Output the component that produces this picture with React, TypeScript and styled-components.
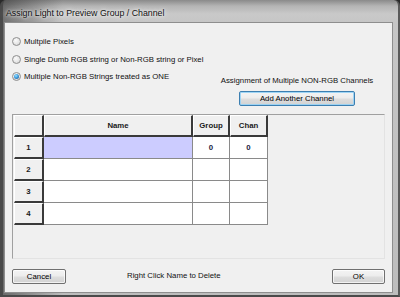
import React from "react";
import styled, { createGlobalStyle } from "styled-components";

const Global = createGlobalStyle`
  html, body { margin: 0; padding: 0; background: #2a2a2a; }
  body { width: 400px; height: 297px; overflow: hidden; }
  * { box-sizing: border-box; }
`;

const Window = styled.div`
  width: 400px;
  height: 297px;
  display: flex;
  flex-direction: column;
  border-radius: 6px 6px 0 0;
  border-left: 3px solid #4a4a4a;
  border-right: 2px solid #5a5a5a;
  border-bottom: 2px solid #4a4a4a;
  background:
    linear-gradient(90deg, rgba(40,40,40,0.55) 0px, rgba(80,80,80,0.0) 60px, rgba(0,0,0,0) 100%),
    linear-gradient(180deg, #8a8a8a 0px, #b4b4b4 6px, #c9c9c9 14px, #c6c6c6 22px, #bdbdbd 100%);
  font-family: "Liberation Sans", Arial, sans-serif;
  color: #000;
`;

const TitleBar = styled.div`
  height: 22px;
  flex: none;
  display: flex;
  align-items: center;
  padding-left: 3px;
  padding-top: 3px;
  font-size: 8.8px;
  color: #111;
  text-shadow: 0 0 6px #f4f4f4, 0 0 3px #ffffff;
`;

const Client = styled.div`
  flex: 1;
  margin: 0 5px 2px 1px;
  background: #f0f0f0;
  border: 1px solid #8e8e8e;
  display: flex;
  flex-direction: column;
  padding: 10px 7px 8px 7px;
  font-size: 7.8px;
  color: #111;
`;

const TopSection = styled.div`
  display: flex;
  justify-content: space-between;
  margin-bottom: 8px;
`;

const OptionList = styled.div`
  display: flex;
  flex-direction: column;
`;

const OptionRow = styled.label`
  height: 17.5px;
  display: flex;
  align-items: center;
  gap: 3px;
  white-space: nowrap;
`;

const Radio = styled.span<{ $checked?: boolean }>`
  width: 9px;
  height: 9px;
  border-radius: 50%;
  border: 1px solid #8f8f8f;
  background: radial-gradient(circle at 40% 35%, #fbfbfb 0%, #e6e6e6 55%, #cfcfcf 100%);
  display: flex;
  align-items: center;
  justify-content: center;
  flex: none;
  &::after {
    content: "";
    display: ${(p) => (p.$checked ? "block" : "none")};
    width: 5px;
    height: 5px;
    border-radius: 50%;
    background: radial-gradient(circle at 40% 35%, #9be3ff 0%, #3f9ee0 45%, #1b4f8a 100%);
  }
`;

const AssignColumn = styled.div`
  width: 160px;
  margin-right: 8px;
  padding-top: 42px;
  display: flex;
  flex-direction: column;
  align-items: center;
  gap: 4px;
`;

const Caption = styled.div`
  line-height: 12px;
  white-space: nowrap;
`;

const Button = styled.button<{ $default?: boolean; $w: number }>`
  width: ${(p) => p.$w}px;
  height: 15px;
  padding: 0;
  font-family: inherit;
  font-size: 7.8px;
  color: #000;
  border-radius: 2px;
  border: 1px solid ${(p) => (p.$default ? "#3c7fb1" : "#707070")};
  background: linear-gradient(180deg, #f4f4f4 0%, #ececec 48%, #dedede 52%, #d2d2d2 100%);
  box-shadow: inset 0 0 0 1px ${(p) => (p.$default ? "rgba(150,210,245,0.9)" : "rgba(255,255,255,0.7)")};
  display: flex;
  align-items: center;
  justify-content: center;
`;

const Panel = styled.div`
  flex: 1;
  border: 1px solid #a0a0a0;
  border-right-color: #e3e3e3;
  border-bottom-color: #e3e3e3;
  background: #f0f0f0;
  padding: 0 0 0 1px;
  margin-bottom: 10px;
`;

const Grid = styled.div`
  display: grid;
  grid-template-columns: 30px 149px 37px 38px;
  grid-auto-rows: 22px;
  width: 254px;
`;

const HeadCell = styled.div`
  background: #f0f0f0;
  border-top: 1px solid #ffffff;
  border-left: 1px solid #ffffff;
  border-right: 2px solid #3a3a3a;
  border-bottom: 2px solid #3a3a3a;
  display: flex;
  align-items: center;
  justify-content: center;
  font-weight: bold;
  font-size: 7.8px;
  color: #1a1a1a;
`;

const DataCell = styled.div<{ $selected?: boolean }>`
  background: ${(p) => (p.$selected ? "#ccccff" : "#ffffff")};
  border-right: 1px solid #8a8a8a;
  border-bottom: 1px solid #8a8a8a;
  display: flex;
  align-items: center;
  justify-content: center;
  font-size: 7.8px;
  font-weight: bold;
  color: #1a1a40;
`;

const BottomRow = styled.div`
  display: flex;
  align-items: center;
  height: 15px;
`;

const Hint = styled.div`
  margin-left: 61px;
  margin-top: -3px;
  white-space: nowrap;
`;

const Spacer = styled.div`
  flex: 1;
`;

const rows = [1, 2, 3, 4];

export default function App() {
  return (
    <>
      <Global />
      <Window>
        <TitleBar>Assign Light to Preview Group / Channel</TitleBar>
        <Client>
          <TopSection>
            <OptionList>
              <OptionRow>
                <Radio />
                Multpile Pixels
              </OptionRow>
              <OptionRow>
                <Radio />
                Single Dumb RGB string or Non-RGB string or Pixel
              </OptionRow>
              <OptionRow>
                <Radio $checked />
                Multiple Non-RGB Strings treated as ONE
              </OptionRow>
            </OptionList>
            <AssignColumn>
              <Caption>Assignment of Multiple NON-RGB Channels</Caption>
              <Button $default $w={116}>Add Another Channel</Button>
            </AssignColumn>
          </TopSection>
          <Panel>
            <Grid>
              <HeadCell />
              <HeadCell>Name</HeadCell>
              <HeadCell>Group</HeadCell>
              <HeadCell>Chan</HeadCell>
              {rows.map((r) => (
                <React.Fragment key={r}>
                  <HeadCell>{r}</HeadCell>
                  <DataCell $selected={r === 1} />
                  <DataCell>{r === 1 ? "0" : ""}</DataCell>
                  <DataCell>{r === 1 ? "0" : ""}</DataCell>
                </React.Fragment>
              ))}
            </Grid>
          </Panel>
          <BottomRow>
            <Button $w={54}>Cancel</Button>
            <Hint>Right Click Name to Delete</Hint>
            <Spacer />
            <Button $w={53}>OK</Button>
          </BottomRow>
        </Client>
      </Window>
    </>
  );
}
